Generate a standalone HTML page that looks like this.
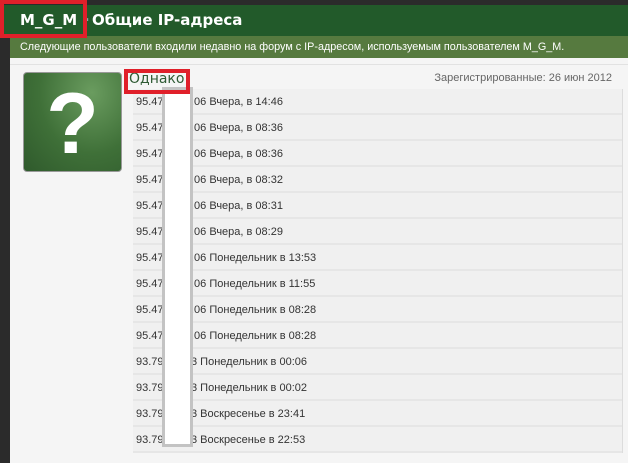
<!DOCTYPE html>
<html><head><meta charset="utf-8"><style>
body{margin:0;width:628px;height:463px;background:#2b2b2b;position:relative;overflow:hidden;font-family:"Liberation Sans",sans-serif}
.hdr{position:absolute;left:0;top:5px;width:628px;height:31px;background:#225a2a;}
.hdr span{position:absolute;top:6px;color:#fff;font-weight:bold;font-size:15px;font-family:"DejaVu Sans",sans-serif}
.sub{position:absolute;left:10px;top:36px;width:618px;height:22px;background:#567a3f;color:#fff;font-size:10.8px;line-height:22px;padding-left:10px;box-sizing:border-box}
.panel{position:absolute;left:10px;top:58px;width:618px;height:405px;background:#f5f5f5}
.topline{position:absolute;left:10px;top:58px;width:618px;height:6px;border-bottom:1px solid #e2e2e2}
.av{position:absolute;left:23px;top:72px;width:97px;height:98px;border:1px solid #999;border-radius:4px;background:radial-gradient(ellipse at 70% 20%,#6a9c5f,#3f7038 55%,#2f5a2c);overflow:hidden}
.q{position:absolute;left:0;top:6px;width:97px;text-align:center;color:#fff;font:bold 86px "Liberation Sans",sans-serif;line-height:90px}
.rows{position:absolute;left:133px;top:89px;width:489px;border-right:1px solid #dcdcdc}
.row{height:24px;border-bottom:2px solid #e6e6e6;background:#f0f0f0;font-size:11px;color:#333;line-height:26px;position:relative}
.row .a{position:absolute;left:3px}
.row .b{position:absolute;left:58px}
.nm{position:absolute;left:129px;top:71px;color:#2f5b34;font-size:14px;font-family:"DejaVu Sans",sans-serif}
.reg{position:absolute;right:16px;top:72px;color:#666;font-size:11px}
.red{position:absolute;border:4px solid #e0202a;box-sizing:border-box}
.blk{position:absolute;left:162px;top:87px;width:31px;height:360px;background:#fff;border:3px solid #c3c3c3;box-sizing:border-box}
</style></head><body>
<div class="hdr"><span style="left:20px">M_G_M</span><span style="left:84px;color:#8aa">·</span><span style="left:92px">Общие IP-адреса</span></div>
<div class="sub">Следующие пользователи входили недавно на форум с IP-адресом, используемым пользователем M_G_M.</div>
<div class="panel"></div>
<div class="topline"></div>
<div class="av"><div class="q">?</div></div>
<div class="nm">Однако</div>
<div class="reg">Зарегистрированные: 26 июн 2012</div>
<div class="rows">
<div class="row"><span class="a">95.47</span><span class="b">.06 Вчера, в 14:46</span></div>
<div class="row"><span class="a">95.47</span><span class="b">.06 Вчера, в 08:36</span></div>
<div class="row"><span class="a">95.47</span><span class="b">.06 Вчера, в 08:36</span></div>
<div class="row"><span class="a">95.47</span><span class="b">.06 Вчера, в 08:32</span></div>
<div class="row"><span class="a">95.47</span><span class="b">.06 Вчера, в 08:31</span></div>
<div class="row"><span class="a">95.47</span><span class="b">.06 Вчера, в 08:29</span></div>
<div class="row"><span class="a">95.47</span><span class="b">.06 Понедельник в 13:53</span></div>
<div class="row"><span class="a">95.47</span><span class="b">.06 Понедельник в 11:55</span></div>
<div class="row"><span class="a">95.47</span><span class="b">.06 Понедельник в 08:28</span></div>
<div class="row"><span class="a">95.47</span><span class="b">.06 Понедельник в 08:28</span></div>
<div class="row"><span class="a">93.79</span><span class="b">3 Понедельник в 00:06</span></div>
<div class="row"><span class="a">93.79</span><span class="b">3 Понедельник в 00:02</span></div>
<div class="row"><span class="a">93.79</span><span class="b">3 Воскресенье в 23:41</span></div>
<div class="row"><span class="a">93.79</span><span class="b">3 Воскресенье в 22:53</span></div>
</div>
<div class="blk"></div>
<div class="red" style="left:0;top:0;width:87px;height:38px"></div>
<div class="red" style="left:124px;top:69px;width:66px;height:25px"></div>
</body></html>
